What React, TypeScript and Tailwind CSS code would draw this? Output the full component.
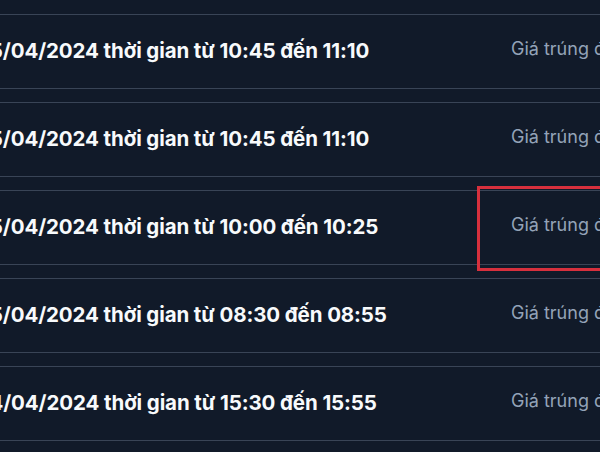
const rows = [
  { date: "25/04/2024", from: "10:45", to: "11:10" },
  { date: "25/04/2024", from: "10:45", to: "11:10" },
  { date: "25/04/2024", from: "10:00", to: "10:25" },
  { date: "25/04/2024", from: "08:30", to: "08:55" },
  { date: "24/04/2024", from: "15:30", to: "15:55" },
]

export default function App() {
  return (
    <div
      className="relative h-[452px] w-[600px] overflow-hidden bg-[#111a29] pt-[14px]"
      style={{ fontFamily: "Inter, 'Noto Sans', sans-serif" }}
    >
      <div className="flex flex-col gap-[13px]">
        {rows.map((r, i) => (
          <div
            key={i}
            className="flex h-[75px] items-center border-y border-[#394456]"
          >
            <div className="ml-[-23px] w-[534px] shrink-0 whitespace-nowrap text-[20.5px] font-bold tracking-[-0.1px] text-[#f8fafc]">
              {r.date} thời gian từ {r.from} đến {r.to}
            </div>
            <div className="mb-[6px] whitespace-nowrap text-[18px] text-[#94a3b8]">
              Giá trúng đấu giá
            </div>
          </div>
        ))}
      </div>
      <div className="absolute left-[477px] top-[186px] h-[85px] w-[140px] border-[3px] border-[#d7303d]" />
    </div>
  )
}
